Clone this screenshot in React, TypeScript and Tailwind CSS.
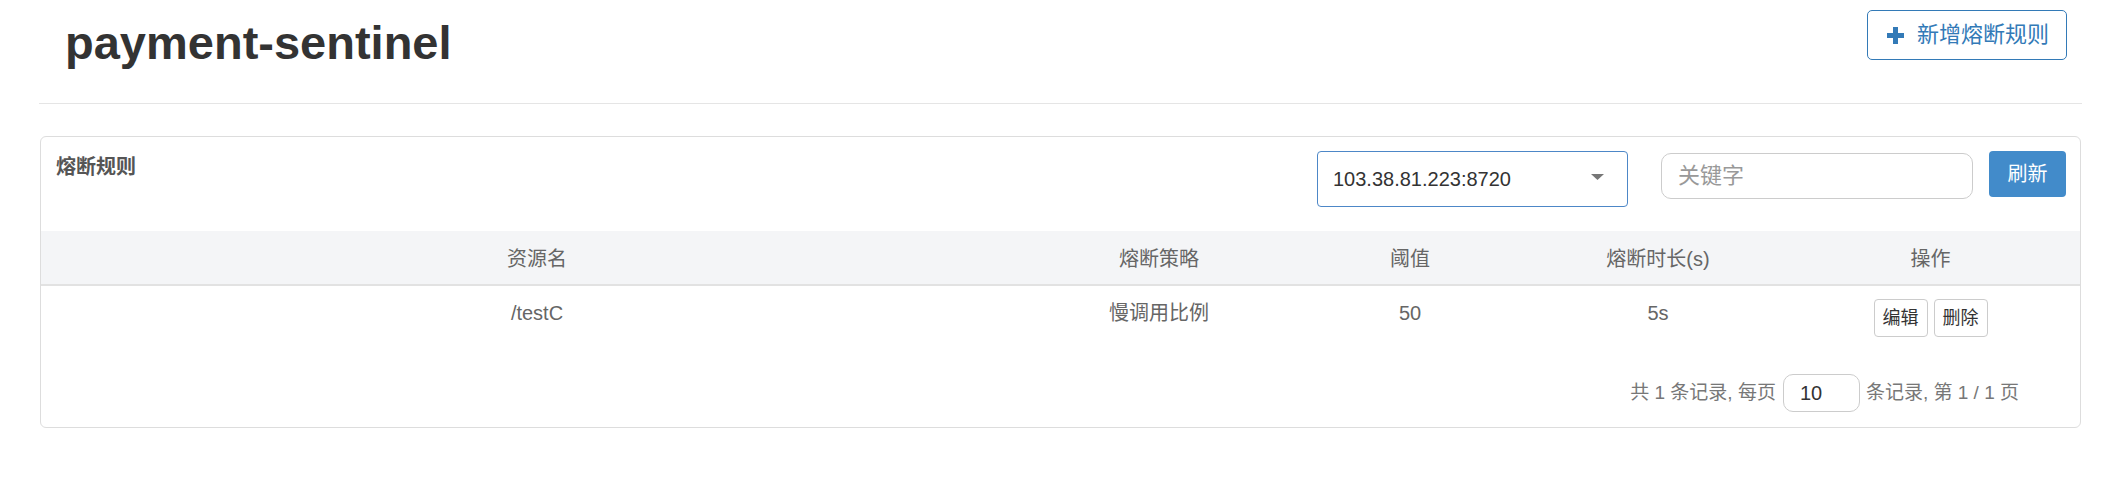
import { useState } from "react";

const font = "font-['Liberation_Sans','Noto_Sans_CJK_SC',sans-serif]";

type Rule = {
  resource: string;
  strategy: string;
  threshold: number;
  timeWindow: string;
};

const rules: Rule[] = [{ resource: "/testC", strategy: "慢调用比例", threshold: 50, timeWindow: "5s" }];

const cols = "grid grid-cols-[992px_252px_250px_246px_1fr]";

function PlusIcon() {
  return (
    <svg width="17" height="17" viewBox="0 0 17 17" aria-hidden="true">
      <rect x="6" y="0" width="5" height="17" fill="#337ab7" />
      <rect x="0" y="6" width="17" height="5" fill="#337ab7" />
    </svg>
  );
}

export default function App() {
  const [keyword, setKeyword] = useState("");
  const [pageSize, setPageSize] = useState("10");

  return (
    <div className={`min-h-screen bg-white ${font}`}>
      <div className="ml-[39px] mr-[26px]">
        {/* Page header */}
        <div className="flex h-[104px] items-start justify-between border-b border-[#e5e5e5]">
          <h1 className="ml-[26px] mt-[19px] text-[47px] font-bold leading-none text-[#333]">payment-sentinel</h1>
          <button className="mr-[15px] mt-[10px] flex h-[50px] w-[200px] items-center gap-[13px] rounded-[5px] border border-[#337ab7] pl-[19px] text-[22px] leading-none text-[#337ab7]">
            <PlusIcon />
            <span>新增熔断规则</span>
          </button>
        </div>

        {/* Rules card */}
        <div className="mx-[1px] mt-[32px] rounded-[6px] border border-[#ddd]">
          <div className="flex h-[94px] items-start pl-[15px] pr-[14px]">
            <h2 className="mt-[16px] text-[20px] font-bold leading-[28px] text-[#555]">熔断规则</h2>

            <div className="ml-auto mt-[14px] flex h-[56px] w-[311px] items-center justify-between rounded-[4px] border border-[#4d87c7] pl-[15px] pr-[23px] text-[20px] text-[#333]">
              <span>103.38.81.223:8720</span>
              <svg width="13" height="6" viewBox="0 0 13 6" aria-hidden="true" className="-mt-[5px]">
                <path d="M0 0h13L6.5 6z" fill="#777" />
              </svg>
            </div>

            <input
              value={keyword}
              onChange={(e) => setKeyword(e.target.value)}
              placeholder="关键字"
              className="ml-[33px] mt-[16px] h-[46px] w-[312px] rounded-[10px] border border-[#ccc] pl-[16px] text-[22px] text-[#333] outline-none placeholder:text-[#999]"
            />

            <button className="ml-[16px] mt-[14px] h-[46px] w-[77px] rounded-[4px] bg-[#428bca] text-[20px] text-white">
              刷新
            </button>
          </div>

          {/* Table header */}
          <div className={`${cols} h-[55px] items-center border-b-2 border-[#e2e2e2] bg-[#f4f5f7] pt-[2px] text-center text-[20px] text-[#666]`}>
            <div>资源名</div>
            <div>熔断策略</div>
            <div>阈值</div>
            <div>熔断时长(s)</div>
            <div>操作</div>
          </div>

          {/* Rows */}
          {rules.map((r) => (
            <div key={r.resource} className={`${cols} text-center text-[20px] leading-[28px] text-[#666]`}>
              <div className="pt-[13px]">{r.resource}</div>
              <div className="pt-[13px]">{r.strategy}</div>
              <div className="pt-[13px]">{r.threshold}</div>
              <div className="pt-[13px]">{r.timeWindow}</div>
              <div className="flex justify-center gap-[6px] pb-[12px] pt-[13px]">
                <button className="h-[38px] w-[54px] rounded-[4px] border border-[#ccc] text-[18px] text-[#333]">编辑</button>
                <button className="h-[38px] w-[54px] rounded-[4px] border border-[#ccc] text-[18px] text-[#333]">删除</button>
              </div>
            </div>
          ))}

          {/* Pagination */}
          <div className="mt-[25px] flex items-center justify-end pb-[15px] pr-[61px] text-[19px] text-[#777]">
            <span>共 1 条记录, 每页</span>
            <input
              value={pageSize}
              onChange={(e) => setPageSize(e.target.value)}
              className="ml-[7px] mr-[6px] h-[38px] w-[77px] rounded-[10px] border border-[#ccc] pl-[16px] text-[20px] text-[#333] outline-none"
            />
            <span>条记录, 第 1 / 1 页</span>
          </div>
        </div>
      </div>
    </div>
  );
}
